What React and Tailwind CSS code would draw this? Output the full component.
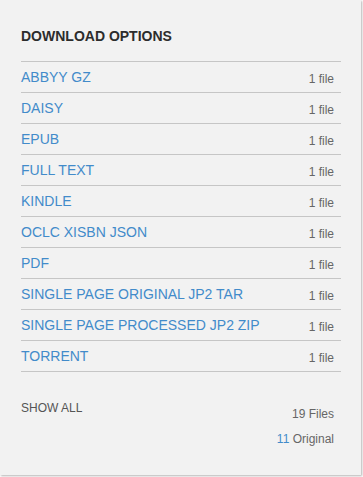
import React from "react";

const rows = [
  "ABBYY GZ",
  "DAISY",
  "EPUB",
  "FULL TEXT",
  "KINDLE",
  "OCLC XISBN JSON",
  "PDF",
  "SINGLE PAGE ORIGINAL JP2 TAR",
  "SINGLE PAGE PROCESSED JP2 ZIP",
  "TORRENT",
];

export default function App() {
  return (
    <div
      className="w-[363px] h-[477px] bg-white"
      style={{ fontFamily: '"Liberation Sans", Arial, sans-serif' }}
    >
      <div className="w-[361px] h-[475px] bg-[#f2f2f2] shadow-[1px_1px_2px_rgba(0,0,0,0.3)] pl-[21px] pr-[20px]">
        <h2 className="pt-[26px] text-[14px] leading-5 font-bold text-[#2c2c2c] mb-[15px]">
          DOWNLOAD OPTIONS
        </h2>
        <ul className="border-t border-[#c6c6c6]">
          {rows.map((r) => (
            <li
              key={r}
              className="h-[31px] border-b border-[#c6c6c6] flex justify-between items-start pr-[7px]"
            >
              <a className="pt-[5px] text-[14px] leading-5 text-[#428bca]">{r}</a>
              <span className="pt-[7px] text-[12px] leading-5 text-[#666]">1 file</span>
            </li>
          ))}
        </ul>
        <div className="flex justify-between items-start pr-[7px]">
          <span className="mt-[28px] text-[12px] leading-4 text-[#555]">SHOW ALL</span>
          <div className="pt-[34px] flex flex-col items-end">
            <span className="text-[12px] leading-4 text-[#666]">19 Files</span>
            <span className="mt-[9px] text-[12px] leading-4 text-[#666]">
              <span className="text-[#428bca]">11</span> Original
            </span>
          </div>
        </div>
      </div>
    </div>
  );
}
